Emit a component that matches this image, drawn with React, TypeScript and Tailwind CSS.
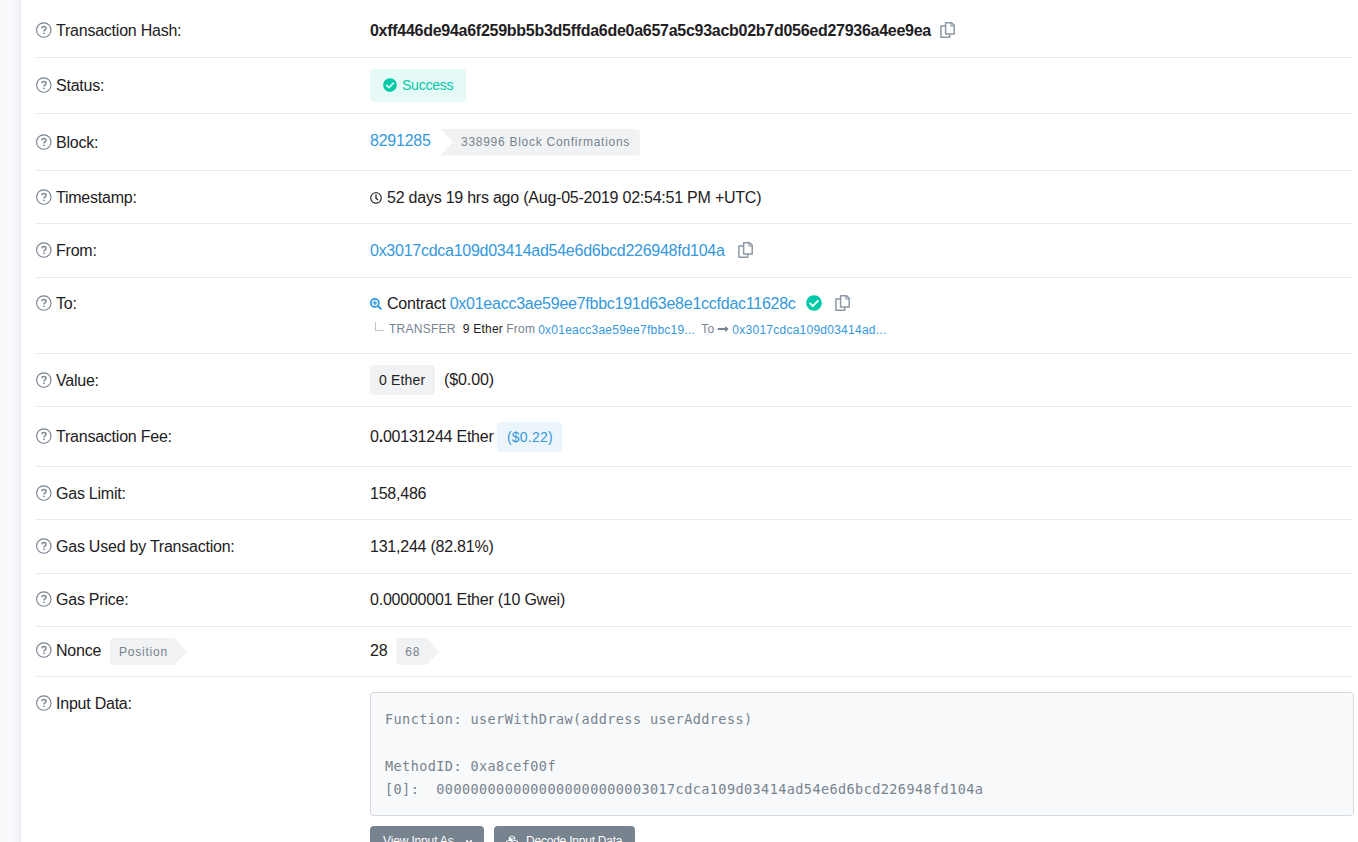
import React from 'react';
import { FaRegClock, FaCheckCircle, FaSearchPlus, FaLongArrowAltRight, FaCubes, FaAngleDown } from 'react-icons/fa';

interface RowProps {
  label: string;
  className: string;
  extra?: React.ReactNode;
  last?: boolean;
  children: React.ReactNode;
}

const QuestionIcon: React.FC = () => (
  <svg viewBox="0 0 16 16" className="mr-1 size-4 shrink-0 text-[#77838f]" fill="none" stroke="currentColor">
    <circle cx="7.8" cy="8" r="7.2" strokeWidth="1.15" />
    <path d="M5.7 6.3C5.9 5.1 6.8 4.5 7.9 4.5c1.2 0 2.2.7 2.2 1.8 0 1.5-2.1 1.6-2.1 3.1" strokeWidth="1.4" />
    <circle cx="8" cy="11.3" r=".9" fill="currentColor" stroke="none" />
  </svg>
);

const CopyIcon: React.FC<{ className: string }> = ({ className }) => (
  <svg
    viewBox="0 0 15 16"
    className={`h-4 w-[15px] shrink-0 text-[#8c98a4] ${className}`}
    fill="none"
    stroke="currentColor"
    strokeWidth="1.5"
    strokeLinejoin="round"
  >
    <path d="M5.6.8h6l2.6 2.6v8.5H5.6z" />
    <path d="M11 .8v3.2h3.2" strokeWidth="1.2" />
    <path d="M5.2 3.9H.9v11.3h8.8v-3" />
  </svg>
);

const Row: React.FC<RowProps> = ({ label, className, extra, last, children }) => (
  <div className={`flex items-start ${last ? '' : 'border-b border-[#e7eaf3]'} ${className}`}>
    <div className="flex h-6 w-[334px] shrink-0 items-center">
      <QuestionIcon />
      <span className="mt-0.5">{label}</span>
      {extra}
    </div>
    <div className="min-w-0 flex-1">{children}</div>
  </div>
);

const Line: React.FC<{ children: React.ReactNode }> = ({ children }) => (
  <div className="flex h-6 items-center">{children}</div>
);

const Tag: React.FC<{ className: string; children: React.ReactNode }> = ({ className, children }) => (
  <span
    className={`flex h-[27px] shrink-0 items-center rounded-l bg-[#f1f2f4] pl-[9px] text-xs tracking-[0.75px] text-[#77838f] [clip-path:polygon(0_0,calc(100%-13px)_0,100%_50%,calc(100%-13px)_100%,0_100%)] ${className}`}
  >
    {children}
  </span>
);

export default function App() {
  return (
    <div className="flex h-[842px] overflow-hidden bg-white font-['Liberation_Sans',Arial,sans-serif] text-base leading-6 tracking-[-0.23px] whitespace-nowrap text-[#1e2022]">
      <div className="w-[21px] shrink-0 border-r border-[#e7eaf3] bg-linear-to-r from-[#f8f9fb] from-60% to-[#f2f3f6]" />
      <div className="ml-[15px] w-[1317px] shrink-0">
        <Row label="Transaction Hash:" className="h-[58px] pt-[18px]">
          <Line>
            <span className="mt-0.5 w-[561px] font-bold tracking-[-0.275px]">
              0xff446de94a6f259bb5b3d5ffda6de0a657a5c93acb02b7d056ed27936a4ee9ea
            </span>
            <CopyIcon className="ml-[9px]" />
          </Line>
        </Row>

        <Row label="Status:" className="h-14 pt-[15px]">
          <Line>
            <span className="flex h-[33px] w-24 items-center rounded bg-[#e5f9f6] pl-[13px] text-sm text-[#00c9a7]">
              <FaCheckCircle className="mr-[5px] size-3.5" />
              Success
            </span>
          </Line>
        </Row>

        <Row label="Block:" className="h-[57px] pt-4">
          <Line>
            <span className="-mt-[3px] w-[61px] text-[#3498db]">8291285</span>
            <span className="ml-[9px] flex h-[27px] w-[200px] items-center rounded-r bg-[#f1f2f4] pl-[21px] text-xs tracking-[0.73px] text-[#77838f] [clip-path:polygon(0_0,100%_0,100%_100%,0_100%,13px_50%)]">
              338996 Block Confirmations
            </span>
          </Line>
        </Row>

        <Row label="Timestamp:" className="h-[53px] pt-3.5">
          <Line>
            <FaRegClock className="mt-0.5 mr-[5px] size-3" />
            <span className="mt-0.5">52 days 19 hrs ago (Aug-05-2019 02:54:51 PM +UTC)</span>
          </Line>
        </Row>

        <Row label="From:" className="h-[54px] pt-3.5">
          <Line>
            <span className="mt-0.5 w-[355px] tracking-[-0.265px] text-[#3498db]">
              0x3017cdca109d03414ad54e6d6bcd226948fd104a
            </span>
            <CopyIcon className="ml-[13px]" />
          </Line>
        </Row>

        <Row label="To:" className="h-[76px] pt-[13px]">
          <Line>
            <FaSearchPlus className="mt-0.5 mr-[5px] size-3 text-[#3498db]" />
            <span className="mt-0.5">Contract</span>
            <span className="mt-0.5 ml-1 w-[347px] tracking-[-0.25px] text-[#3498db]">
              0x01eacc3ae59ee7fbbc191d63e8e1ccfdac11628c
            </span>
            <FaCheckCircle className="ml-[9px] size-4 text-[#00c9a7]" />
            <CopyIcon className="ml-[13px]" />
          </Line>
          <div className="mt-[3px] flex h-[22px] items-center text-xs tracking-[0.25px] text-[#77838f]">
            <span className="-mt-1.5 mr-[5px] ml-[5px] h-[9px] w-[9px] border-b border-l border-[#bdc5d1]" />
            <span>TRANSFER</span>
            <span className="ml-[7px] text-[#1e2022]">9 Ether</span>
            <span className="ml-[3px]">From</span>
            <span className="mt-0.5 ml-[3px] text-[#3498db]">0x01eacc3ae59ee7fbbc19...</span>
            <span className="ml-[6px]">To</span>
            <FaLongArrowAltRight className="mx-[3px] size-3" />
            <span className="mt-0.5 text-[#3498db]">0x3017cdca109d03414ad...</span>
          </div>
        </Row>

        <Row label="Value:" className="h-[53px] pt-3.5">
          <Line>
            <span className="flex h-[30px] w-[65px] items-center rounded bg-[#f1f2f4] pl-[9px] text-sm tracking-[0.15px]">
              0 Ether
            </span>
            <span className="ml-[9px] tracking-[-0.1px]">($0.00)</span>
          </Line>
        </Row>

        <Row label="Transaction Fee:" className="h-[60px] pt-[17px]">
          <Line>
            <span className="mt-0.5 w-[123px]">
              0<b>.</b>00131244 Ether
            </span>
            <span className="mt-0.5 ml-1 flex h-[30px] w-[65px] items-center rounded bg-[#ebf5fb] pl-2.5 text-sm tracking-[0.2px] text-[#3498db]">
              ($0.22)
            </span>
          </Line>
        </Row>

        <Row label="Gas Limit:" className="h-[53px] pt-3.5">
          <Line>
            <span className="mt-0.5">158,486</span>
          </Line>
        </Row>

        <Row label="Gas Used by Transaction:" className="h-[54px] pt-3.5">
          <Line>
            <span className="mt-0.5">131,244 (82.81%)</span>
          </Line>
        </Row>

        <Row label="Gas Price:" className="h-[53px] pt-[13px]">
          <Line>
            <span className="mt-0.5">0.00000001 Ether (10 Gwei)</span>
          </Line>
        </Row>

        <Row
          label="Nonce"
          className="h-[50px] pt-[11px]"
          extra={<Tag className="mt-[3px] ml-[9px] w-[77px]">Position</Tag>}
        >
          <Line>
            <span className="mt-0.5">28</span>
            <Tag className="mt-[3px] ml-[9px] w-[43px]">68</Tag>
          </Line>
        </Row>

        <Row label="Input Data:" className="pt-3.5" last>
          <pre className="mt-px h-[124px] w-[984px] rounded border border-[#d5dae2] bg-[#f8f9fa] px-3.5 pt-[15px] font-['DejaVu_Sans_Mono',monospace] text-[13.5px] leading-[23.4px] tracking-[0.42px] text-[#77838f]">
            {`Function: userWithDraw(address userAddress)

MethodID: 0xa8cef00f
[0]:  0000000000000000000000003017cdca109d03414ad54e6d6bcd226948fd104a`}
          </pre>
          <div className="mt-2.5 flex gap-2.5 text-xs tracking-[-0.15px] text-white">
            <div className="flex h-[29px] w-[114px] items-center rounded-sm bg-[#77838f] pl-[13px]">
              View Input As
              <FaAngleDown className="mt-0.5 ml-2.5 size-2.5" />
            </div>
            <div className="flex h-[29px] w-[141px] items-center rounded-sm bg-[#77838f] pl-3">
              <FaCubes className="mr-2 size-3" />
              <span className="tracking-[-0.22px]">Decode Input Data</span>
            </div>
          </div>
        </Row>
      </div>
    </div>
  );
}
